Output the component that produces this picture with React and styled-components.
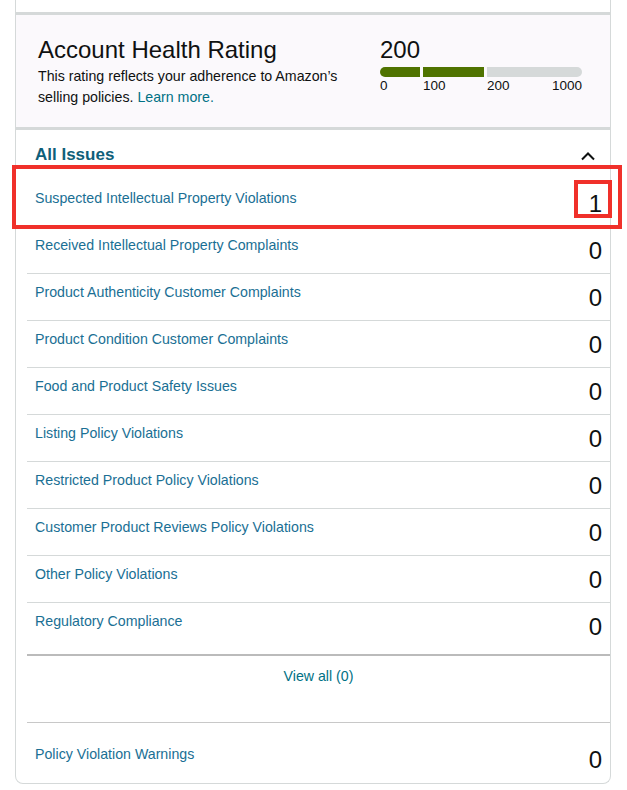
import React from 'react'
import styled, { createGlobalStyle } from 'styled-components'

const GlobalStyle = createGlobalStyle`
  html, body { margin: 0; padding: 0; background: #fff; }
  body { font-family: "Liberation Sans", Arial, sans-serif; color: #0f1111; }
`

const issues = [
  { label: 'Suspected Intellectual Property Violations', count: 1, flagged: true },
  { label: 'Received Intellectual Property Complaints', count: 0 },
  { label: 'Product Authenticity Customer Complaints', count: 0 },
  { label: 'Product Condition Customer Complaints', count: 0 },
  { label: 'Food and Product Safety Issues', count: 0 },
  { label: 'Listing Policy Violations', count: 0 },
  { label: 'Restricted Product Policy Violations', count: 0 },
  { label: 'Customer Product Reviews Policy Violations', count: 0 },
  { label: 'Other Policy Violations', count: 0 },
  { label: 'Regulatory Compliance', count: 0 },
]

const App = () => {
  return (
    <Page>
      <GlobalStyle />
      <Card>
        <TopSpace />
        <Header>
          <HeaderText>
            <Title>Account Health Rating</Title>
            <Desc>
              This rating reflects your adherence to Amazon’s selling policies.{' '}
              <Link>Learn more.</Link>
            </Desc>
          </HeaderText>
          <Rating>
            <Score>200</Score>
            <Bar>
              <Seg w={40} color="#4f7300" />
              <Seg w={61} color="#4f7300" />
              <Seg w={95} color="#d5d9d9" />
            </Bar>
            <Scale>
              <Tick w={43}>0</Tick>
              <Tick w={64}>100</Tick>
              <Tick grow>200</Tick>
              <span>1000</span>
            </Scale>
          </Rating>
        </Header>

        <SectionHead>
          <SectionTitle>All Issues</SectionTitle>
          <svg width="16" height="10" viewBox="0 0 16 10">
            <polyline points="2,8.5 8,2.5 14,8.5" fill="none" stroke="#0f1111" strokeWidth="2" />
          </svg>
        </SectionHead>

        <List>
          {issues.map((it) => (
            <Row key={it.label}>
              <RowLabel>{it.label}</RowLabel>
              <Count>
                {it.count}
                {it.flagged && <CountMark />}
              </Count>
              {it.flagged && <RowMark />}
            </Row>
          ))}
        </List>

        <ViewAll>
          <Link>View all (0)</Link>
        </ViewAll>

        <Warnings>
          <RowLabel>Policy Violation Warnings</RowLabel>
          <Count>0</Count>
        </Warnings>
      </Card>
    </Page>
  )
}

export default App

const Page = styled.div`
  padding: 0 16px 6px 15px;
`

const Card = styled.div`
  border: 1px solid #d5d9d9;
  border-top: none;
  border-radius: 0 0 8px 8px;
  background: #fff;
`

const TopSpace = styled.div`
  height: 12px;
  border-bottom: 3px solid #d5d9d9;
`

const Header = styled.div`
  display: flex;
  justify-content: space-between;
  align-items: flex-start;
  background: #fbf9fc;
  height: 115px;
  box-sizing: border-box;
  padding: 21px 28px 0 22px;
  border-bottom: 3px solid #d5d9d9;
`

const HeaderText = styled.div`
  width: 320px;
`

const Title = styled.h2`
  margin: 0;
  font-size: 24px;
  font-weight: 400;
  line-height: 28px;
  color: #0f1111;
`

const Desc = styled.p`
  margin: 2px 0 0;
  font-size: 14.2px;
  line-height: 21px;
  color: #0f1111;
`

const Link = styled.a`
  color: #007185;
  cursor: pointer;
`

const Rating = styled.div`
  width: 202px;
  padding-top: 0;
`

const Score = styled.div`
  font-size: 24px;
  line-height: 28px;
  color: #0f1111;
`

const Bar = styled.div`
  display: flex;
  gap: 3px;
  height: 10px;
  margin-top: 3px;
  border-radius: 5px;
  overflow: hidden;
`

const Seg = styled.div`
  width: ${(p) => p.w}px;
  flex-grow: ${(p) => (p.w > 90 ? 1 : 0)};
  background: ${(p) => p.color};
`

const Scale = styled.div`
  display: flex;
  font-size: 13.5px;
  line-height: 18px;
  color: #0f1111;
`

const Tick = styled.span`
  width: ${(p) => (p.w ? `${p.w}px` : 'auto')};
  flex-grow: ${(p) => (p.grow ? 1 : 0)};
`

const SectionHead = styled.div`
  display: flex;
  justify-content: space-between;
  align-items: center;
  height: 50px;
  padding: 0 14px 0 19px;
  svg { margin-top: 2px; }
`

const SectionTitle = styled.h3`
  margin: 0;
  font-size: 17px;
  font-weight: 700;
  color: #0f5f7a;
`

const List = styled.div`
  margin-left: 11px;
  padding-bottom: 5px;
  border-bottom: 2px solid #bbbbbb;
`

const Row = styled.div`
  position: relative;
  display: flex;
  justify-content: space-between;
  align-items: center;
  height: 46px;
  padding: 0 8px;
  border-bottom: 1px solid #d5d9d9;
  &:last-child { border-bottom: none; }
`

const RowLabel = styled.span`
  font-size: 14.2px;
  color: #1a6f94;
  margin-bottom: 10px;
  cursor: pointer;
`

const Count = styled.span`
  position: relative;
  font-size: 24px;
  line-height: 28px;
  color: #0f1111;
  margin-top: 2px;
`

const RowMark = styled.div`
  position: absolute;
  left: -15px;
  right: -12px;
  top: -15px;
  bottom: -3px;
  border: 4px solid #f0302a;
  pointer-events: none;
`

const CountMark = styled.div`
  position: absolute;
  left: -15px;
  right: -10px;
  top: -10px;
  bottom: 0;
  border: 4px solid #f0302a;
`

const ViewAll = styled.div`
  margin-left: 11px;
  height: 67px;
  box-sizing: border-box;
  padding-top: 12px;
  text-align: center;
  font-size: 14.2px;
  border-bottom: 1px solid #c8c8c8;
`

const Warnings = styled.div`
  display: flex;
  justify-content: space-between;
  align-items: center;
  height: 60px;
  padding: 12px 8px 0 19px;
  box-sizing: border-box;
`
